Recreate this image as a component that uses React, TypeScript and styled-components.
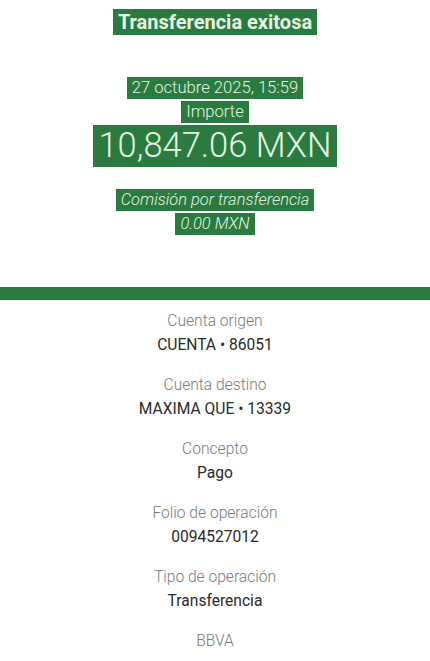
import React from 'react';
import styled, { createGlobalStyle } from 'styled-components';

const GlobalStyle = createGlobalStyle`
  body {
    margin: 0;
    background: #ffffff;
    font-family: Roboto, "Open Sans", Arial, sans-serif;
  }
`;

const GREEN = '#2b7a3f';
const MINT = '#e4f6e2';

const Page = styled.div`
  display: flex;
  flex-direction: column;
  width: 430px;
  min-height: 661px;
  background: #ffffff;
`;

const Header = styled.section`
  display: flex;
  flex-direction: column;
  align-items: center;
  padding-top: 10px;
`;

const Line = styled.div<{ $h: number; $mt?: number }>`
  display: flex;
  justify-content: center;
  align-items: center;
  height: ${(p) => p.$h}px;
  margin-top: ${(p) => p.$mt ?? 0}px;
`;

const Mark = styled.span<{ $size: number; $weight?: number; $italic?: boolean; $pad?: number }>`
  display: inline-block;
  background: ${GREEN};
  color: ${MINT};
  font-size: ${(p) => p.$size}px;
  font-weight: ${(p) => p.$weight ?? 300};
  font-style: ${(p) => (p.$italic ? 'italic' : 'normal')};
  line-height: 1.2;
  padding: ${(p) => p.$pad ?? 1}px 5px;
  white-space: nowrap;
`;

const Bar = styled.div`
  height: 13px;
  background: ${GREEN};
  margin-top: 52px;
`;

const Details = styled.section`
  display: flex;
  flex-direction: column;
  align-items: center;
  padding-top: 10px;
`;

const Group = styled.div`
  display: flex;
  flex-direction: column;
  align-items: center;
  gap: 2px;
  margin-bottom: 18px;
`;

const Label = styled.div`
  height: 22px;
  line-height: 22px;
  font-size: 15.6px;
  font-weight: 300;
  color: #7a7a7a;
`;

const Value = styled.div`
  height: 22px;
  line-height: 22px;
  font-size: 15.6px;
  font-weight: 400;
  color: #2a2a2a;
`;

const rows = [
  { label: 'Cuenta origen', value: 'CUENTA • 86051' },
  { label: 'Cuenta destino', value: 'MAXIMA QUE • 13339' },
  { label: 'Concepto', value: 'Pago' },
  { label: 'Folio de operación', value: '0094527012' },
  { label: 'Tipo de operación', value: 'Transferencia' },
  { label: 'BBVA', value: '' },
];

export default function App() {
  return (
    <Page>
      <GlobalStyle />
      <Header>
        <Line $h={24}>
          <Mark $size={20} $weight={700}>Transferencia exitosa</Mark>
        </Line>
        <Line $h={22} $mt={43}>
          <Mark $size={16.6}>27 octubre 2025, 15:59</Mark>
        </Line>
        <Line $h={22} $mt={2}>
          <Mark $size={16.6}>Importe</Mark>
        </Line>
        <Line $h={40} $mt={3}>
          <Mark $size={34.5} $pad={0}>10,847.06 MXN</Mark>
        </Line>
        <Line $h={22} $mt={23}>
          <Mark $size={16.4} $italic>Comisión por transferencia</Mark>
        </Line>
        <Line $h={22} $mt={2}>
          <Mark $size={16.4} $italic>0.00 MXN</Mark>
        </Line>
      </Header>
      <Bar />
      <Details>
        {rows.map((row) => (
          <Group key={row.label}>
            <Label>{row.label}</Label>
            {row.value && <Value>{row.value}</Value>}
          </Group>
        ))}
      </Details>
    </Page>
  );
}
